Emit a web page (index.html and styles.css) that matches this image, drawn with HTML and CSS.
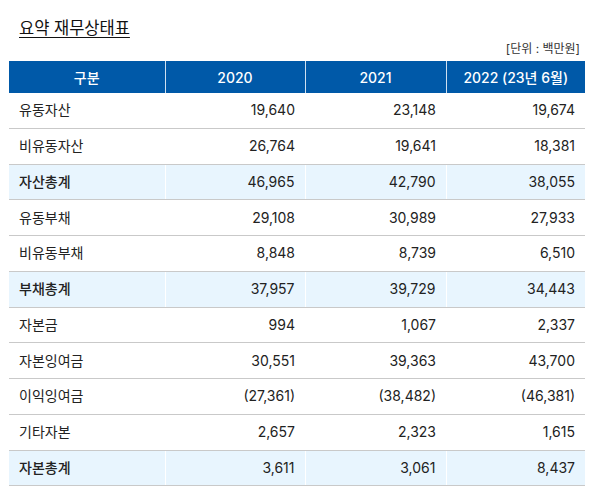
FILE: index.html
```html
<!DOCTYPE html>
<html lang="ko">
<head>
<meta charset="utf-8">
<link rel="stylesheet" href="styles.css">
</head>
<body>
<div class="wrap">
  <h2 class="title">요약 재무상태표</h2>
  <p class="unit">[단위 : 백만원]</p>
  <table class="fin">
    <colgroup>
      <col class="c1"><col class="c2"><col class="c3"><col class="c4">
    </colgroup>
    <thead>
      <tr><th>구분</th><th>2020</th><th>2021</th><th>2022 (23년 6월)</th></tr>
    </thead>
    <tbody>
      <tr><td>유동자산</td><td>19,640</td><td>23,148</td><td>19,674</td></tr>
      <tr><td>비유동자산</td><td>26,764</td><td>19,641</td><td>18,381</td></tr>
      <tr class="total"><td>자산총계</td><td>46,965</td><td>42,790</td><td>38,055</td></tr>
      <tr><td>유동부채</td><td>29,108</td><td>30,989</td><td>27,933</td></tr>
      <tr><td>비유동부채</td><td>8,848</td><td>8,739</td><td>6,510</td></tr>
      <tr class="total"><td>부채총계</td><td>37,957</td><td>39,729</td><td>34,443</td></tr>
      <tr><td>자본금</td><td>994</td><td>1,067</td><td>2,337</td></tr>
      <tr><td>자본잉여금</td><td>30,551</td><td>39,363</td><td>43,700</td></tr>
      <tr><td>이익잉여금</td><td>(27,361)</td><td>(38,482)</td><td>(46,381)</td></tr>
      <tr><td>기타자본</td><td>2,657</td><td>2,323</td><td>1,615</td></tr>
      <tr class="total"><td>자본총계</td><td>3,611</td><td>3,061</td><td>8,437</td></tr>
    </tbody>
  </table>
</div>
</body>
</html>
```
FILE: styles.css
```css
html, body {
  margin: 0;
  padding: 0;
  background: #fff;
}
body {
  font-family: "Inter", "Noto Sans CJK KR", sans-serif;
  color: #222;
}
.wrap {
  padding: 17px 15px 0 9px;
}
.title {
  margin: 0 0 0 10px;
  font-size: 16.5px;
  font-weight: 400;
  line-height: 22px;
  text-decoration: underline;
  text-underline-offset: 3px;
  color: #111;
}
.unit {
  margin: 0;
  padding: 1px 5px 0 0;
  font-size: 12px;
  line-height: 18px;
  text-align: right;
  color: #333;
}
.fin {
  margin-top: 3px;
  width: 576px;
  border-collapse: collapse;
  table-layout: fixed;
  font-size: 14px;
}
.c1 { width: 156px; }
.c2 { width: 140px; }
.c3 { width: 141px; }
.c4 { width: 139px; }
.fin th {
  height: 32px;
  padding: 0;
  background: #0059a8;
  color: #fff;
  font-weight: 500;
  text-align: center;
  border-left: 1px solid #cfe0f0;
}
.fin th:first-child {
  border-left: none;
}
.fin td {
  height: 34.75px;
  padding: 0 10px;
  text-align: right;
  border-bottom: 1px solid #c9c9c9;
  line-height: 20px;
}
.fin td:first-child {
  text-align: left;
}
.fin tr.total td {
  background: #e8f5fe;
  border-left: 1px solid #fff;
}
.fin tr.total td:first-child {
  border-left: none;
  font-weight: 500;
}
```
